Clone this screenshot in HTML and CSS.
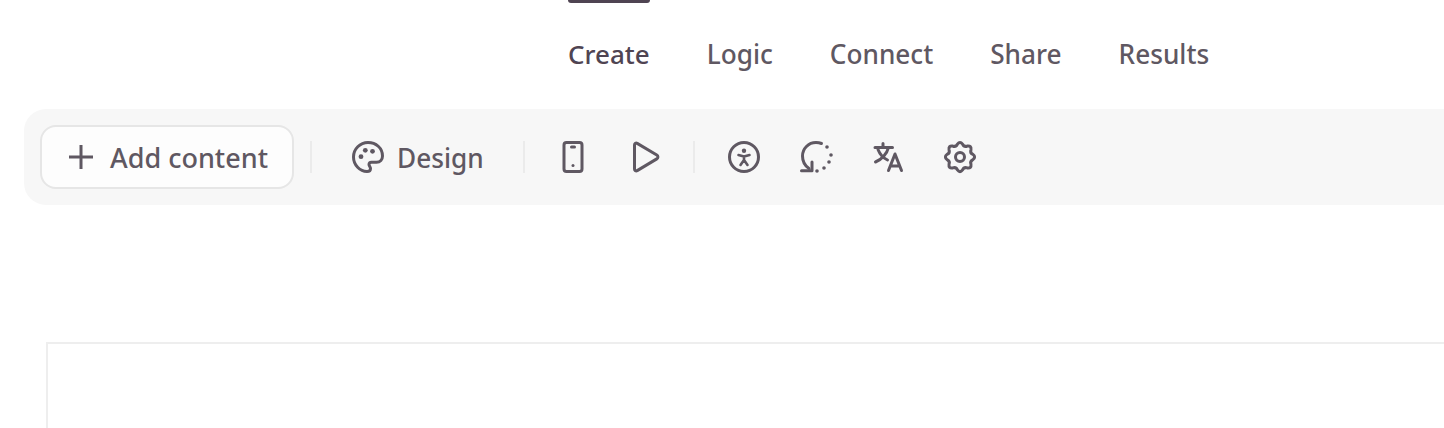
FILE: index.html
```html
<!DOCTYPE html>
<html lang="en">
<head>
<meta charset="utf-8">
<title>Create</title>
<link rel="stylesheet" href="styles.css">
</head>
<body>
<nav class="tabs">
  <a class="tab tab-active">Create</a>
  <a class="tab">Logic</a>
  <a class="tab">Connect</a>
  <a class="tab">Share</a>
  <a class="tab">Results</a>
</nav>
<div class="toolbar">
  <button class="add-btn">
    <svg class="ico-plus" viewBox="0 0 24 24"><path d="M12 0v24M0 12h24"/></svg>
    <span>Add content</span>
  </button>
  <span class="sep sep-first"></span>
  <button class="design-btn">
    <svg class="ico" viewBox="0 0 32 32"><path d="M16 1.500C8 1.500 1.500 8 1.500 16S8 30.500 15 30.500c2.500 0 3.500-1.500 3.500-3 0-1.500-1.500-2.500-1.500-4 0-1.300 1-2.300 2.500-2.300h5c3.700 0 6-2.700 6-6.200C30.500 7 24 1.500 16 1.500z"/><circle class="dot" cx="9" cy="15.700" r="2.400"/><circle class="dot" cx="13.300" cy="9.300" r="2.400"/><circle class="dot" cx="20.500" cy="10.300" r="2.400"/></svg>
    <span class="label">Design</span>
  </button>
  <span class="sep sep-second"></span>
  <button class="icon-btn">
    <svg class="ico" viewBox="0 0 32 32"><rect x="7" y="1.500" width="18" height="29" rx="2.500"/><path d="M14.500 6h3"/><circle class="dot" cx="16" cy="24.500" r="1.500"/></svg>
  </button>
  <button class="icon-btn">
    <svg class="ico" viewBox="0 0 32 32"><path d="M5.500 4c0-1.500 1.400-2.300 2.700-1.600L27.800 14c1.500.9 1.500 3 0 3.900L8.200 29.600c-1.300.7-2.700-.1-2.700-1.600z"/></svg>
  </button>
  <span class="sep sep-third"></span>
  <button class="icon-btn">
    <svg class="ico" viewBox="0 0 32 32"><circle cx="16" cy="16" r="14.500"/><circle class="dot" cx="16" cy="9.700" r="2.200"/><path class="thin" d="M10.500 14 16 15.500 21.500 14M16 15.500V19l-3.500 5M16 19l3.500 5"/></svg>
  </button>
  <button class="icon-btn">
    <svg class="ico" viewBox="0 0 32 32"><path d="M21.500 2.500C19.800 1.800 18 1.500 16 1.500 8.500 1.500 2.500 7.500 2.500 15c0 5 2.300 9.700 6.500 12.500"/><path d="M1.500 29.800h10.500V21"/><circle class="dot" cx="27" cy="6" r="1.800"/><circle class="dot" cx="31" cy="14" r="1.800"/><circle class="dot" cx="29" cy="21" r="1.800"/><circle class="dot" cx="24" cy="27" r="1.800"/><circle class="dot" cx="17" cy="30" r="1.800"/></svg>
  </button>
  <button class="icon-btn">
    <svg class="ico" viewBox="0 0 32 32"><path d="M3 6.500h17.500M11 2.500v4M16.500 6.500C15 12.500 10 18.500 3.500 21M6 8.500c2 5 5 8.500 9.500 10.500M16.500 29.500l6.500-16.500 6.500 16.500M18.500 25h9"/></svg>
  </button>
  <button class="icon-btn">
    <svg class="ico" viewBox="0 0 32 32"><circle cx="16" cy="16" r="4.500"/><path d="M13.425 3.050Q16-.3 18.575 3.050 20.020 6.300 23.330 5.030 27.530 4.470 26.970 8.670 25.700 11.980 28.950 13.425 32.300 16 28.950 18.575 25.700 20.020 26.970 23.330 27.530 27.530 23.330 26.970 20.020 25.700 18.575 28.950 16 32.300 13.425 28.950 11.980 25.700 8.670 26.970 4.470 27.530 5.030 23.330 6.300 20.020 3.050 18.575-.3 16 3.050 13.425 6.300 11.980 5.030 8.670 4.470 4.470 8.670 5.030 11.980 6.300 13.425 3.050z"/></svg>
  </button>
</div>
<main class="canvas"></main>
</body>
</html>
```
FILE: styles.css
```css
* { box-sizing: border-box; }
html, body { margin: 0; height: 100%; overflow: hidden; background: #fff; }
body {
  font-family: "Noto Sans", "Open Sans", sans-serif;
  color: #5f5862;
  display: flex;
  flex-direction: column;
}
.tabs {
  display: flex;
  gap: 57px;
  padding-left: 568px;
  height: 109px;
}
.tab {
  position: relative;
  font-size: 26.2px;
  line-height: 34px;
  padding-top: 37px;
  font-weight: 500;
}
.tab-active {
  font-size: 26px;
  color: #4f4452;
}
.tab-active::before {
  content: "";
  position: absolute;
  top: 0;
  left: 0;
  right: 0;
  height: 3px;
  background: #4f4452;
  border-radius: 0 0 3px 3px;
}
.toolbar {
  margin-left: 24px;
  height: 96px;
  background: #f7f7f7;
  border-radius: 22px 0 0 22px;
  display: flex;
  align-items: center;
  padding: 0 0 0 16px;
}
button {
  font: inherit;
  color: inherit;
  background: none;
  border: 0;
  padding: 0;
  display: flex;
  align-items: center;
}
.label { padding-top: 2px; }
.add-btn {
  width: 254px;
  height: 64px;
  background: #fdfdfd;
  border: 2px solid #e6e6e6;
  border-radius: 16px;
  padding-left: 27px;
  gap: 17px;
  font-size: 27px;
  font-weight: 500;
}
.ico-plus { width: 24px; height: 24px; fill: none; stroke: #5f5862; stroke-width: 3; }
.ico { width: 32px; height: 32px; fill: none; stroke: #5f5862; stroke-width: 3; stroke-linecap: round; stroke-linejoin: round; display: block; overflow: visible; }
.thin { stroke-width: 2.600; }
.dot { fill: #5f5862; stroke: none; }
.sep { width: 2px; height: 32px; background: #ebebeb; flex: none; }
.sep-first { margin-left: 16px; }
.design-btn { margin-left: 40px; gap: 13px; font-size: 26.2px; font-weight: 500; }
.sep-second { margin-left: 39px; }
.icon-btn { margin-left: 40px; }
.sep-second + .icon-btn { margin-left: 32px; }
.sep-third { margin-left: 32px; }
.sep-third + .icon-btn { margin-left: 33px; }
.canvas {
  margin: 137px 0 0 46px;
  flex: 1;
  border: 2px solid #eeeeee;
  border-right: 0;
  border-bottom: 0;
}
```
